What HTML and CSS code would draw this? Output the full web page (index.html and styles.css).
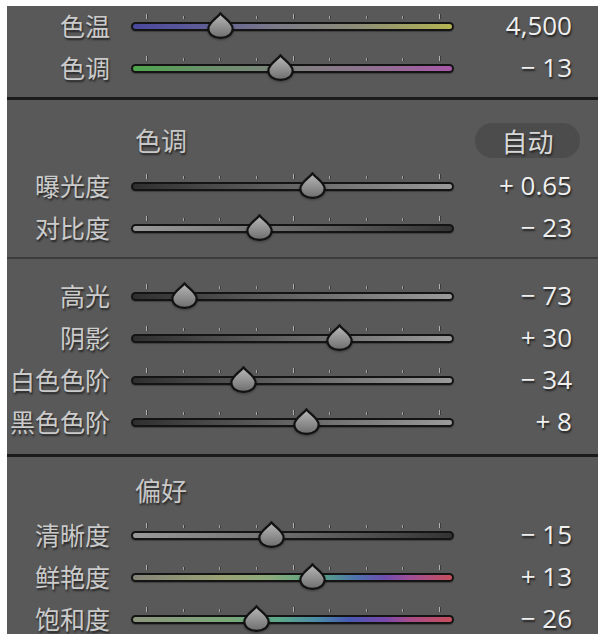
FILE: index.html
```html
<!DOCTYPE html>
<html lang="zh-CN">
<head>
<meta charset="utf-8">
<title>基本调整</title>
<link rel="stylesheet" href="styles.css">
</head>
<body>
<svg class="defs" width="0" height="0" aria-hidden="true">
  <defs>
    <linearGradient id="thumbFill" x1="0" y1="0" x2="0" y2="1">
      <stop offset="0" stop-color="#b8b8b8"/>
      <stop offset="0.55" stop-color="#909090"/>
      <stop offset="1" stop-color="#6e6e6e"/>
    </linearGradient>
    <symbol id="thumb" viewBox="0 0 27 27">
      <path d="M13.5 1.2 C15.2 4.6 25.6 10.2 25.6 16.4 C25.6 22.2 20.2 25.8 13.5 25.8 C6.8 25.8 1.4 22.2 1.4 16.4 C1.4 10.2 11.8 4.6 13.5 1.2 Z" fill="url(#thumbFill)" stroke="#121212" stroke-width="2.2" stroke-linejoin="round"/>
    </symbol>
  </defs>
</svg>

<div class="panel">
  <section class="section s-wb">
    <div class="row">
      <span class="label">色温</span>
      <div class="slider">
        <div class="ticks"><i class="big"></i><i></i><i></i><i></i><i class="big"></i><i></i><i></i><i></i><i class="big"></i></div>
        <div class="track t-temp"></div>
        <svg class="thumb" style="left:27.6%"><use href="#thumb"/></svg>
      </div>
      <span class="value">4,500</span>
    </div>
    <div class="row">
      <span class="label">色调</span>
      <div class="slider">
        <div class="ticks"><i class="big"></i><i></i><i></i><i></i><i class="big"></i><i></i><i></i><i></i><i class="big"></i></div>
        <div class="track t-tint"></div>
        <svg class="thumb" style="left:46.4%"><use href="#thumb"/></svg>
      </div>
      <span class="value">− 13</span>
    </div>
  </section>

  <hr class="divider heavy">

  <section class="section s-tone">
    <div class="heading">
      <span class="heading-title">色调</span>
      <button class="auto" type="button">自动</button>
    </div>
    <div class="row">
      <span class="label">曝光度</span>
      <div class="slider">
        <div class="ticks"><i class="big"></i><i></i><i></i><i></i><i class="big"></i><i></i><i></i><i></i><i class="big"></i></div>
        <div class="track t-up"></div>
        <svg class="thumb" style="left:56.3%"><use href="#thumb"/></svg>
      </div>
      <span class="value">+ 0.65</span>
    </div>
    <div class="row">
      <span class="label">对比度</span>
      <div class="slider">
        <div class="ticks"><i class="big"></i><i></i><i></i><i></i><i class="big"></i><i></i><i></i><i></i><i class="big"></i></div>
        <div class="track t-down"></div>
        <svg class="thumb" style="left:39.9%"><use href="#thumb"/></svg>
      </div>
      <span class="value">− 23</span>
    </div>
  </section>

  <hr class="divider light">

  <section class="section s-levels">
    <div class="row">
      <span class="label">高光</span>
      <div class="slider">
        <div class="ticks"><i class="big"></i><i></i><i></i><i></i><i class="big"></i><i></i><i></i><i></i><i class="big"></i></div>
        <div class="track t-up"></div>
        <svg class="thumb" style="left:16.7%"><use href="#thumb"/></svg>
      </div>
      <span class="value">− 73</span>
    </div>
    <div class="row">
      <span class="label">阴影</span>
      <div class="slider">
        <div class="ticks"><i class="big"></i><i></i><i></i><i></i><i class="big"></i><i></i><i></i><i></i><i class="big"></i></div>
        <div class="track t-up"></div>
        <svg class="thumb" style="left:64.4%"><use href="#thumb"/></svg>
      </div>
      <span class="value">+ 30</span>
    </div>
    <div class="row">
      <span class="label">白色色阶</span>
      <div class="slider">
        <div class="ticks"><i class="big"></i><i></i><i></i><i></i><i class="big"></i><i></i><i></i><i></i><i class="big"></i></div>
        <div class="track t-up"></div>
        <svg class="thumb" style="left:34.7%"><use href="#thumb"/></svg>
      </div>
      <span class="value">− 34</span>
    </div>
    <div class="row">
      <span class="label">黑色色阶</span>
      <div class="slider">
        <div class="ticks"><i class="big"></i><i></i><i></i><i></i><i class="big"></i><i></i><i></i><i></i><i class="big"></i></div>
        <div class="track t-up"></div>
        <svg class="thumb" style="left:54.2%"><use href="#thumb"/></svg>
      </div>
      <span class="value">+ 8</span>
    </div>
  </section>

  <hr class="divider heavy">

  <section class="section s-pref">
    <div class="heading">
      <span class="heading-title">偏好</span>
    </div>
    <div class="row">
      <span class="label">清晰度</span>
      <div class="slider">
        <div class="ticks"><i class="big"></i><i></i><i></i><i></i><i class="big"></i><i></i><i></i><i></i><i class="big"></i></div>
        <div class="track t-down"></div>
        <svg class="thumb" style="left:43.5%"><use href="#thumb"/></svg>
      </div>
      <span class="value">− 15</span>
    </div>
    <div class="row">
      <span class="label">鲜艳度</span>
      <div class="slider">
        <div class="ticks"><i class="big"></i><i></i><i></i><i></i><i class="big"></i><i></i><i></i><i></i><i class="big"></i></div>
        <div class="track t-vib"></div>
        <svg class="thumb" style="left:56.3%"><use href="#thumb"/></svg>
      </div>
      <span class="value">+ 13</span>
    </div>
    <div class="row">
      <span class="label">饱和度</span>
      <div class="slider">
        <div class="ticks"><i class="big"></i><i></i><i></i><i></i><i class="big"></i><i></i><i></i><i></i><i class="big"></i></div>
        <div class="track t-sat"></div>
        <svg class="thumb" style="left:38.7%"><use href="#thumb"/></svg>
      </div>
      <span class="value">− 26</span>
    </div>
  </section>
</div>
</body>
</html>
```

FILE: styles.css
```css
* { box-sizing: border-box; }

html, body {
  margin: 0;
  padding: 0;
  background: #ffffff;
}

.defs {
  position: absolute;
  width: 0;
  height: 0;
  overflow: hidden;
}

.panel {
  margin: 6px 2px 0 7px;
  background: #595959;
  font-family: "Noto Sans CJK SC", "Noto Sans", sans-serif;
  display: flex;
  flex-direction: column;
}

.section {
  display: flex;
  flex-direction: column;
  gap: 12px;
}

.s-wb { padding: 5px 0 14px; }
.s-tone { padding: 22px 0 14px; }
.s-tone .heading { margin-bottom: 1px; }
.s-levels { padding: 22px 0 17px; }
.s-pref { padding: 15px 0 0; }

.divider {
  margin: 0;
  border: 0;
  flex: none;
}
.divider.heavy {
  height: 3px;
  background: #1b1b1b;
}
.divider.light {
  height: 2px;
  background: #3c3c3c;
}

.row {
  display: grid;
  grid-template-columns: 124px 323px 118px;
  align-items: center;
  height: 30px;
}

.label {
  text-align: right;
  padding-right: 21px;
  font-size: 25px;
  line-height: 30px;
  color: #cbcbcb;
  margin-top: -3px;
  white-space: nowrap;
  text-shadow: 1px 2px 2px rgba(0, 0, 0, 0.6);
}

.value {
  text-align: right;
  font-family: "Open Sans", "Noto Sans", sans-serif;
  font-size: 26px;
  line-height: 30px;
  color: #efefef;
  white-space: nowrap;
  margin-top: -3px;
  text-shadow: 1px 2px 2px rgba(0, 0, 0, 0.65);
}

.slider {
  position: relative;
  height: 30px;
  padding-top: 3px;
}

.ticks {
  height: 5px;
  padding: 0 14px 0 15px;
  display: flex;
  justify-content: space-between;
  align-items: flex-end;
}
.ticks i {
  display: block;
  width: 1px;
  height: 3px;
  background: #a4a4a4;
  box-shadow: 1px 0 0 rgba(0, 0, 0, 0.35);
}
.ticks i.big {
  height: 5px;
  background: #b0b0b0;
}

.track {
  margin-top: 3px;
  height: 9px;
  border: 2px solid #141414;
  border-radius: 5px;
  box-shadow: 0 1px 1px rgba(0, 0, 0, 0.3);
}

.t-temp { background: linear-gradient(90deg, #4a489e 0%, #5f5d96 22%, #7b7a88 45%, #8c8c78 70%, #b4b452 100%); }
.t-tint { background: linear-gradient(90deg, #4ea64e 0%, #6a926a 22%, #7f837f 48%, #8d738d 72%, #a758a8 100%); }
.t-up   { background: linear-gradient(90deg, #2f2f2f 0%, #5a5a5a 40%, #9a9a9a 100%); }
.t-down { background: linear-gradient(90deg, #9a9a9a 0%, #6a6a6a 50%, #333333 100%); }
.t-vib  { background: linear-gradient(90deg, #858578 0%, #9aa274 28%, #8eaa7a 42%, #58a682 58%, #4e72ae 70%, #6e4eb0 79%, #9c4e9a 86%, #c84f5c 100%); }
.t-sat  { background: linear-gradient(90deg, #8d967d 0%, #7aa878 30%, #5aa88a 46%, #4a8aa8 58%, #4858b2 68%, #7a48ac 79%, #a84c88 87%, #c84e5c 100%); }

.thumb {
  position: absolute;
  top: 1px;
  width: 27px;
  height: 27px;
  margin-left: -13.5px;
  overflow: visible;
  filter: drop-shadow(0 1px 1px rgba(0, 0, 0, 0.35));
}

.heading {
  display: flex;
  align-items: center;
  justify-content: space-between;
  height: 36px;
  padding: 0 18px 0 128px;
}

.heading-title {
  font-size: 26px;
  line-height: 36px;
  color: #c8c8c8;
  text-shadow: 1px 2px 2px rgba(0, 0, 0, 0.6);
}

.auto {
  width: 105px;
  height: 35px;
  border: 0;
  border-radius: 18px;
  background: #4c4c4c;
  font-family: "Noto Sans CJK SC", "Noto Sans", sans-serif;
  font-size: 26px;
  line-height: 35px;
  padding: 0;
  color: #d8d8d8;
  text-shadow: 1px 2px 2px rgba(0, 0, 0, 0.5);
}
```
